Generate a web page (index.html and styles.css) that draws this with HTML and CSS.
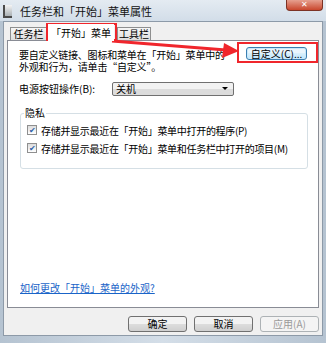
FILE: index.html
```html
<!DOCTYPE html>
<html>
<head>
<meta charset="utf-8">
<link rel="stylesheet" href="styles.css">
</head>
<body>
<div class="window">
  <div class="titlebar">
    <span class="appicon"></span>
    <span class="title">任务栏和「开始」菜单属性</span>
    <span class="close">✕</span>
  </div>
  <div class="client">
    <div class="tabs">
      <span class="tab t1">任务栏</span>
      <span class="tab active">「开始」菜单</span>
      <span class="tab t3">工具栏</span>
    </div>
    <div class="panel">
      <div class="intro">
        <p class="introtext"><span class="ln">要自定义链接、图标和菜单在「开始」菜单中的</span><span class="ln">外观和行为，请单击“自定义”。</span></p>
        <button class="btn custom">自定义(C)...</button>
      </div>
      <div class="power">
        <span class="plabel">电源按钮操作(B):</span>
        <span class="select">关机<span class="caret"></span></span>
      </div>
      <fieldset class="group">
        <legend>隐私</legend>
        <label class="check"><span class="box">✔</span>存储并显示最近在「开始」菜单中打开的程序(P)</label>
        <label class="check"><span class="box">✔</span>存储并显示最近在「开始」菜单和任务栏中打开的项目(M)</label>
      </fieldset>
      <div class="spacer"></div>
      <a class="link">如何更改「开始」菜单的外观?</a>
    </div>
    <div class="buttons">
      <button class="btn">确定</button>
      <button class="btn">取消</button>
      <button class="btn disabled">应用(A)</button>
    </div>
  </div>
  <div class="mark tabmark"></div>
  <div class="mark btnmark"></div>
  <svg class="arrow" width="326" height="343" viewBox="0 0 326 343">
    <line x1="112" y1="41" x2="226" y2="50" stroke="#f0262c" stroke-width="3"/>
    <polygon points="239,51 224,43 222,58" fill="#f0262c"/>
  </svg>
</div>
</body>
</html>
```
FILE: styles.css
```css
* { box-sizing: border-box; }
html, body { margin: 0; padding: 0; }
body {
  width: 326px; height: 343px; overflow: hidden;
  font-family: "Noto Sans CJK SC", "Liberation Sans", sans-serif;
  font-size: 10px; color: #000;
}
.window {
  position: relative;
  width: 326px; height: 343px;
  background: linear-gradient(90deg, #b5c3d1, #d4dee8 50%, #b5c3d1);
  display: flex; flex-direction: column;
  padding: 0 3px 7px 3px;
}
.titlebar {
  height: 21px; flex: none;
  display: flex; align-items: center;
  background: linear-gradient(#e4ebf2, #d2dde8);
  margin: 0 -3px;
  padding-left: 3px;
}
.appicon {
  width: 9px; height: 13px;
  border-left: 2px solid #4a4a4a; border-bottom: 2px solid #4a4a4a;
  background: linear-gradient(#f4f4f4, #a9b0b4);
  margin-right: 8px; margin-top: 1px;
}
.title { font-size: 11px; line-height: 12px; color: #111; flex: 1; }
.close {
  align-self: flex-start;
  width: 37px; height: 11px;
  background: linear-gradient(#e6a08f, #c9472d);
  border: 1px solid #7c3224; border-top: none;
  border-radius: 0 0 4px 4px;
  color: #fff; font-size: 8px; line-height: 8px; text-align: center;
  margin-right: 3px; overflow: hidden;
}
.client {
  flex: 1; background: #f0f0f0;
  display: flex; flex-direction: column;
  padding: 0 3px 3px 3px;
  border: 1px solid #8d9aa8;
}
.tabs { display: flex; height: 18px; padding-left: 3px; align-items: flex-end; flex: none; }
.tab {
  border: 1px solid #8e8f8f; border-bottom: none;
  background: linear-gradient(#f6f6f6, #dedede);
  height: 13px; line-height: 12px; text-align: center;
  font-size: 10px; white-space: nowrap;
}
.t1 { width: 37px; }
.t3 { width: 34px; margin-left: 3px; }
.tab.active {
  background: #fff; height: 17px; line-height: 15px; margin-bottom: -1px; position: relative; z-index: 1;
  width: 66px; margin-left: 1px; border-color: #fff;
}
.panel {
  background: #fff; border: 1px solid #898c95;
  height: 268px; flex: none;
  display: flex; flex-direction: column;
  padding: 0 11px 0 11px;
}
.intro { display: flex; justify-content: space-between; align-items: flex-start; }
.introtext { margin: 8px 0 0 0; font-size: 10px; white-space: nowrap; letter-spacing: -0.2px; display: flex; flex-direction: column; }
.ln { display: block; height: 12px; line-height: 12px; }
.btn {
  font-family: inherit; font-size: 10px;
  border: 1px solid #707070; border-radius: 3px;
  background: linear-gradient(#f2f2f2 50%, #dddddd 50%, #cfcfcf);
  height: 16px; padding: 0; color: #000; white-space: nowrap; line-height: 12px;
}
.custom {
  margin-top: 6px; height: 13px; line-height: 10px; width: 61px;
  border-color: #3c7fb1; background: linear-gradient(#eaf6fd 50%, #d9f0fc 50%, #bee6fd);
  box-shadow: inset 0 0 0 1px #c8e8fb;
}
.power { display: flex; align-items: center; margin-top: 8px; }
.plabel { width: 93px; }
.select {
  width: 122px; height: 14px; border: 1px solid #707070; border-radius: 2px;
  background: linear-gradient(#f2f2f2 50%, #dcdcdc 50%);
  padding-left: 3px; line-height: 12px; font-size: 10px;
  display: flex; justify-content: space-between; align-items: center;
}
.caret { width: 0; height: 0; border: 3px solid transparent; border-top: 3px solid #000; margin: 3px 5px 0 0; }
.group {
  margin: 11px 0 0 1px; border: 1px solid #d5dfe5; border-radius: 3px;
  padding: 2px 0 11px 6px; width: 288px; min-width: 0;
}
.group legend { padding: 0 1px; font-size: 10px; line-height: 12px; margin-left: -3px; }
.check { display: flex; align-items: center; height: 18px; font-size: 10px; white-space: nowrap; letter-spacing: -0.3px; }
.box {
  width: 10px; height: 10px; border: 1px solid #8f8f8f; background: linear-gradient(#dcdcdc, #fff);
  font-size: 8px; line-height: 8px; color: #2a5ea8; text-align: center; margin-right: 4px; flex: none;
}
.spacer { flex: 1; }
.link { color: #1a64c8; text-decoration: underline; margin: 0 0 13px 1px; font-size: 10px; line-height: 12px; }
.buttons { display: flex; justify-content: flex-end; gap: 7px; padding: 8px 0 0 0; }
.buttons .btn { width: 59px; height: 16px; }
.btn.disabled { color: #9a9a9a; border-color: #adb2b5; background: #f4f4f4; }
.mark { position: absolute; border: 2px solid #f0262c; }
.tabmark { left: 46px; top: 23px; width: 71px; height: 18px; }
.btnmark { left: 237px; top: 42px; width: 81px; height: 21px; }
.arrow { position: absolute; left: 0; top: 0; pointer-events: none; }
```
